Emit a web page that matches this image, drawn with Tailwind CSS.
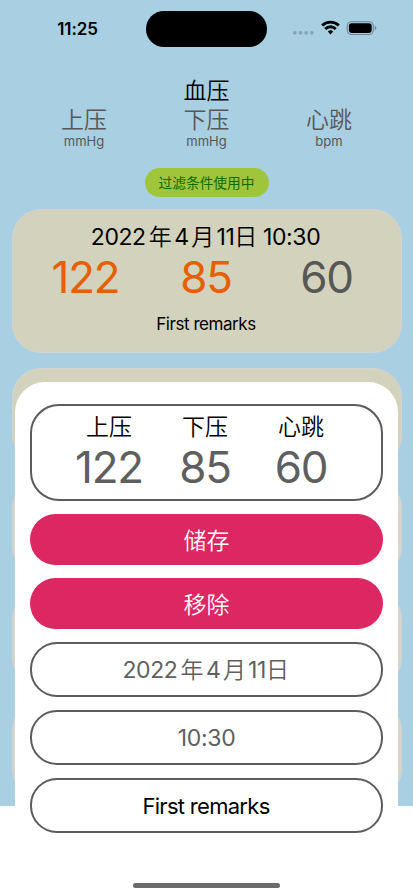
<!DOCTYPE html>
<html lang="zh-Hans">
<head>
<meta charset="utf-8">
<meta name="viewport" content="width=device-width, initial-scale=1">
<title>血压</title>
<script src="https://cdn.jsdelivr.net/npm/@tailwindcss/browser@4"></script>
</head>
<body class="bg-white">
<div class="relative w-[413px] h-[896px] overflow-hidden bg-white font-['Inter','Noto_Sans_CJK_SC',sans-serif] text-black">
  <main class="h-[806px] overflow-hidden bg-[#a9cfe2]">
    <!-- Status bar -->
    <header class="flex h-[58px] items-start">
      <div class="w-[146px] pl-[9px] pt-[18px] text-center text-[17px] leading-[22px] font-semibold tracking-[-0.1px]">11:25</div>
      <div class="mt-[11px] h-[35.5px] w-[121px] rounded-full bg-black"></div>
      <div class="flex pl-[26px] pt-[20px]">
        <svg class="w-[22px] h-4" viewBox="0 0 22 16" fill="#86a5b4"><circle cx="1.8" cy="12.8" r="1.9"/><circle cx="7.5" cy="12.8" r="1.9"/><circle cx="13.2" cy="12.8" r="1.9"/><circle cx="18.9" cy="12.8" r="1.9"/></svg>
        <svg class="ml-[6px] w-[19px] h-[15px]" viewBox="0 0 19 15" fill="none" stroke="#000" stroke-width="2.8"><path d="M1.2 5.400a12 12 0 0 1 16.6 0"/><path d="M4.2 8.9a7.6 7.6 0 0 1 10.6 0"/><path d="M6.8 11.5a3.9 3.9 0 0 1 5.4 0L9.5 14.4Z" fill="#000" stroke="none"/></svg>
        <svg class="ml-[6px] w-[32px] h-[16px]" viewBox="0 0 32 16"><rect x="1.3" y="1.7" width="26" height="12.8" rx="4.2" fill="none" stroke="#6d8692" stroke-width="1.1"/><rect x="2.9" y="3.2" width="22.8" height="9.7" rx="2.8"/><path d="M28.8 6v4.2c1-.4 1.5-1.1 1.5-2.1s-.5-1.700-1.500-2.100Z" fill="#6d8692"/></svg>
      </div>
    </header>

    <h1 class="mt-[19px] text-center text-[23px] leading-[29px] font-[350]">血压</h1>
    <div class="flex justify-between px-[23px] text-center text-[#575757]">
      <div class="w-[122px]"><div class="text-[23px] leading-[29px] font-[350]">上压</div><div class="-mt-[2px] mb-px text-[13px] leading-[16px]">mmHg</div></div>
      <div class="w-[122px]"><div class="text-[23px] leading-[29px] font-[350]">下压</div><div class="-mt-[2px] mb-px text-[13px] leading-[16px]">mmHg</div></div>
      <div class="w-[122px]"><div class="text-[23px] leading-[29px] font-[350]">心跳</div><div class="-mt-[2px] mb-px text-[13px] leading-[16px]">bpm</div></div>
    </div>
    <div class="mx-auto mt-[18px] flex h-[29px] w-[124px] items-center justify-center rounded-full bg-[#9fc63b] pt-px text-[13.7px] text-[#0b6a00]">过滤条件使用中</div>

    <!-- Records -->
    <div class="mt-[12px] flex flex-col px-[11.5px]">
      <section class="h-[144px] rounded-[29px] border-[1.5px] border-[#d3d3d3] bg-[#d3d3bd] pt-[13px] text-center">
        <div class="pr-[2px] text-[23px] leading-[29px] tracking-[-0.4px]">2022<span class="mx-[3px] font-[350]">年</span>4<span class="mx-[2.5px] font-[350]">月</span>11<span class="font-[350]">日</span> 10:30</div>
        <div class="-mt-px flex justify-between pl-[10px] pr-[11px] text-[44px] leading-[52px] font-[370] tracking-[-1.2px] text-[#e66000]">
          <div class="w-[126px]">122</div><div class="w-[114px]">85</div><div class="w-[126px] text-[#575757]">60</div>
        </div>
        <div class="mt-[10px] pr-px text-[17px] leading-[22px] tracking-[-0.45px]">First remarks</div>
      </section>
      <section class="mt-[14.5px] h-[97px] shrink-0 rounded-[29px] border-[1.5px] border-[#d3d3d3] bg-[#d3d3bd]"></section>
      <section class="mt-[14px] h-[97px] shrink-0 rounded-[29px] border-2 border-[#d3d3d0] bg-[#d6d5c7]"></section>
      <section class="mt-[14px] h-[97px] shrink-0 rounded-[29px] border-2 border-[#d3d3d0] bg-[#d6d5c7]"></section>
      <section class="mt-[14px] h-[97px] shrink-0 rounded-[29px] border-2 border-[#d3d3d0] bg-[#d6d5c7]"></section>
    </div>
  </main>

  <!-- Edit sheet -->
  <div class="absolute top-[382px] bottom-0 left-[15px] w-[383px] rounded-t-[30px] bg-white px-[15px] pt-[22px] text-center text-[23px]">
    <div class="flex h-[97px] justify-center rounded-[29px] border-2 border-[#5c5c5c] pt-[7px] pr-[3px]">
      <div class="w-[96px]"><div class="leading-[29px] font-[350]">上压</div><div class="-mt-px text-[44px] leading-[52px] font-[370] tracking-[-1.2px] text-[#5f5f5f]">122</div></div>
      <div class="w-[96px]"><div class="leading-[29px] font-[350]">下压</div><div class="-mt-px text-[44px] leading-[52px] font-[370] tracking-[-1.2px] text-[#5f5f5f]">85</div></div>
      <div class="w-[96px]"><div class="leading-[29px] font-[350]">心跳</div><div class="-mt-px text-[44px] leading-[52px] font-[370] tracking-[-1.2px] text-[#5f5f5f]">60</div></div>
    </div>
    <button class="mt-[13px] block h-[51px] w-full rounded-full bg-[#dc2763] pt-[3px] font-[350] text-white">储存</button>
    <button class="mt-[13px] block h-[51px] w-full rounded-full bg-[#dc2763] pt-[3px] font-[350] text-white">移除</button>
    <div class="mt-[13px] flex h-[55px] items-center justify-center rounded-[27px] border-2 border-[#5c5c5c] pt-px pr-[2px] tracking-[-0.4px] text-[#5f5f5f]"><div>2022<span class="mx-[3px] font-[350]">年</span>4<span class="mx-[2.5px] font-[350]">月</span>11<span class="font-[350]">日</span></div></div>
    <div class="mt-[13px] flex h-[55px] items-center justify-center rounded-[27px] border-2 border-[#5c5c5c] pt-[2px] tracking-[-0.3px] text-[#5f5f5f]">10:30</div>
    <div class="mt-[13px] flex h-[55px] items-center justify-center rounded-[27px] border-2 border-[#5c5c5c] pt-[2px] pr-px text-[22px] tracking-[-0.7px]">First remarks</div>
  </div>
  <!-- Home indicator -->
  <div class="absolute bottom-[8px] left-[133px] h-[5px] w-[147px] rounded-full bg-[#6b6b6b]"></div>
</div>
</body>
</html>
